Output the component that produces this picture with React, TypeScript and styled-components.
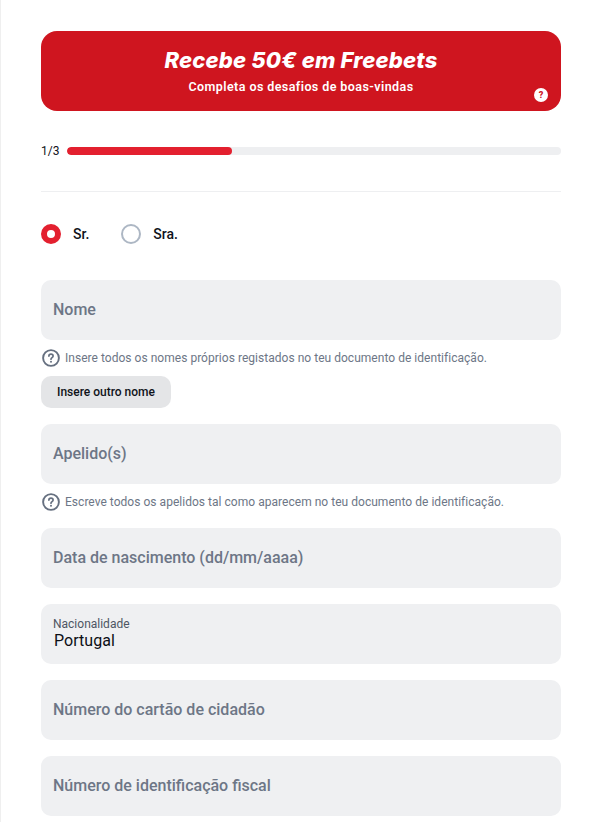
import React from "react";
import styled, { createGlobalStyle } from "styled-components";

const Global = createGlobalStyle`
  html, body { margin: 0; padding: 0; background: #fff; height: 822px; overflow: hidden; }
  * { box-sizing: border-box; }
  body { font-family: Roboto, "Liberation Sans", sans-serif; }
`;

const Page = styled.main`
  width: 598px;
  height: 822px;
  padding: 31px 37px 0 40px;
  border-left: 1px solid #efefef;
  display: flex;
  flex-direction: column;
  overflow: hidden;
`;

const Banner = styled.section`
  position: relative;
  height: 80px;
  flex: none;
  border-radius: 16px;
  background: #cf151f;
  color: #fff;
  display: flex;
  flex-direction: column;
  align-items: center;
  padding-top: 14px;
`;

const BannerTitle = styled.h1`
  margin: 0;
  font-family: Inter, sans-serif;
  font-style: italic;
  font-weight: 800;
  font-size: 22px;
  line-height: 30px;
  letter-spacing: 0.2px;
  white-space: nowrap;
`;

const BannerSub = styled.p`
  margin: 4px 0 0;
  font-size: 12.5px;
  font-weight: 600;
  line-height: 16px;
  letter-spacing: 0.42px;
`;

const HelpBadge = styled.span`
  position: absolute;
  right: 13px;
  bottom: 9px;
  width: 14px;
  height: 14px;
  border-radius: 50%;
  background: #fff;
  color: #cf151f;
  font-size: 9px;
  font-weight: 900;
  line-height: 14px;
  text-align: center;
`;

const ProgressRow = styled.div`
  display: flex;
  align-items: center;
  gap: 8px;
  margin-top: 36px;
  height: 8px;
`;

const ProgressLabel = styled.span`
  font-size: 12px;
  color: #10131a;
  width: 18px;
  line-height: 16px;
  white-space: nowrap;
`;

const Track = styled.div`
  flex: 1;
  height: 8px;
  border-radius: 4px;
  background: #eeeff1;
  overflow: hidden;
`;

const Fill = styled.div`
  height: 100%;
  border-radius: 4px;
  background: #e3202f;
`;

const Divider = styled.hr`
  margin: 36px 0 0;
  border: 0;
  border-top: 1px solid #eeeff1;
`;

const RadioGroup = styled.div`
  display: flex;
  margin-top: 32px;
  height: 20px;
  gap: 32px;
`;

const RadioOption = styled.label`
  display: flex;
  align-items: center;
  gap: 12px;
  font-size: 14px;
  font-weight: 500;
  color: #10131a;
`;

const RadioDot = styled.span<{ $on?: boolean }>`
  width: 20px;
  height: 20px;
  border-radius: 50%;
  border: ${(p) => (p.$on ? "6px solid #e3202f" : "2px solid #adb7c4")};
  background: #fff;
`;

const Field = styled.div<{ $mt?: number }>`
  flex: none;
  height: 60px;
  margin-top: ${(p) => p.$mt ?? 16}px;
  border-radius: 10px;
  background: #eff0f2;
  padding: 0 12px;
  display: flex;
  flex-direction: column;
  justify-content: center;
`;

const Placeholder = styled.span`
  font-size: 16px;
  font-weight: 500;
  color: #6d7686;
  line-height: 20px;
`;

const SmallLabel = styled.span`
  font-size: 12px;
  color: #4e5663;
  line-height: 14px;
`;

const Value = styled.span`
  font-size: 16px;
  color: #0c0f16;
  line-height: 20px;
  letter-spacing: 0.05px;
  padding-left: 1px;
`;

const Hint = styled.div`
  display: flex;
  align-items: center;
  gap: 5px;
  margin-top: 9px;
  height: 18px;
  padding-left: 1px;
  font-size: 12px;
  letter-spacing: 0.03px;
  color: #6d7686;
  white-space: nowrap;
`;

const SecondaryButton = styled.button`
  align-self: flex-start;
  flex: none;
  width: 130px;
  height: 32px;
  margin-top: 9px;
  border: 0;
  padding: 0;
  border-radius: 10px;
  background: #e4e5e7;
  color: #10131a;
  font-family: inherit;
  font-size: 12px;
  font-weight: 500;
`;

const HelpIcon = () => (
  <svg width="18" height="18" viewBox="0 0 18 18" fill="none" style={{ flex: "none" }}>
    <circle cx="9" cy="9" r="7.9" stroke="#667080" strokeWidth="1.9" />
    <path d="M6.9 7.1c0-1.2 1-2 2.1-2s2.1.8 2.1 1.9c0 1.6-2.1 1.6-2.1 3.2" stroke="#667080" strokeWidth="1.7" strokeLinecap="round" />
    <circle cx="9" cy="12.8" r="1" fill="#667080" />
  </svg>
);

export default function App() {
  return (
    <Page>
      <Global />
      <Banner>
        <BannerTitle>Recebe 50€ em Freebets</BannerTitle>
        <BannerSub>Completa os desafios de boas-vindas</BannerSub>
        <HelpBadge>?</HelpBadge>
      </Banner>
      <ProgressRow>
        <ProgressLabel>1/3</ProgressLabel>
        <Track>
          <Fill style={{ width: "33.3%" }} />
        </Track>
      </ProgressRow>
      <Divider />
      <RadioGroup>
        <RadioOption><RadioDot $on />Sr.</RadioOption>
        <RadioOption><RadioDot />Sra.</RadioOption>
      </RadioGroup>
      <Field $mt={36}><Placeholder>Nome</Placeholder></Field>
      <Hint><HelpIcon />Insere todos os nomes próprios registados no teu documento de identificação.</Hint>
      <SecondaryButton>Insere outro nome</SecondaryButton>
      <Field><Placeholder>Apelido(s)</Placeholder></Field>
      <Hint><HelpIcon />Escreve todos os apelidos tal como aparecem no teu documento de identificação.</Hint>
      <Field $mt={17}><Placeholder>Data de nascimento (dd/mm/aaaa)</Placeholder></Field>
      <Field>
        <SmallLabel>Nacionalidade</SmallLabel>
        <Value>Portugal</Value>
      </Field>
      <Field><Placeholder>Número do cartão de cidadão</Placeholder></Field>
      <Field><Placeholder>Número de identificação fiscal</Placeholder></Field>
    </Page>
  );
}
